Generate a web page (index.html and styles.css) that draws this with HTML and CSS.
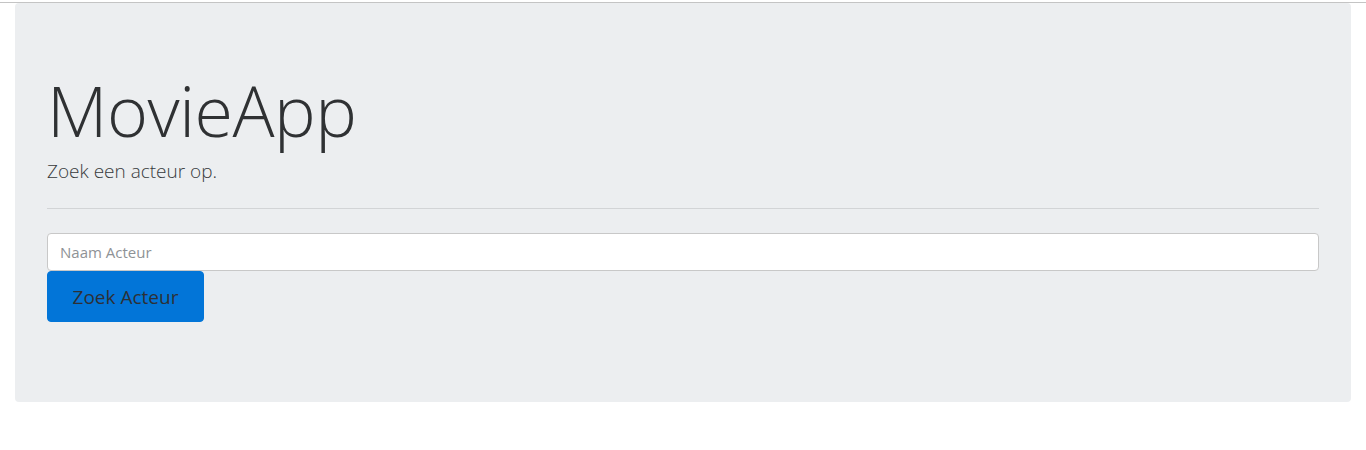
FILE: index.html
```html
<!DOCTYPE html>
<html lang="nl">
<head>
<meta charset="utf-8">
<title>MovieApp</title>
<link rel="stylesheet" href="styles.css">
</head>
<body>
<div class="topline"></div>
<div class="container">
  <div class="jumbotron">
    <h1 class="display">MovieApp</h1>
    <p class="lead">Zoek een acteur op.</p>
    <hr class="divider">
    <form class="search">
      <input class="input" type="text" placeholder="Naam Acteur">
      <button class="btn" type="button">Zoek Acteur</button>
    </form>
  </div>
</div>
</body>
</html>
```
FILE: styles.css
```css
* { box-sizing: border-box; }
html, body { margin: 0; padding: 0; background: #fff; }
body {
  font-family: "Open Sans", "Noto Sans", sans-serif;
  color: #373a3c;
}
.topline {
  height: 3px;
  border-bottom: 1px solid #c4c4c4;
  background: #fff;
}
.container {
  padding: 0 15px;
}
.jumbotron {
  background: #eceef0;
  border-radius: 4px;
  padding: 64px 32px 64px;
  height: 399px;
}
.display {
  margin: 0;
  font-family: "Open Sans", sans-serif;
  font-weight: 300;
  font-size: 70px;
  line-height: 86px;
  color: #2f3133;
  letter-spacing: -0.5px;
}
.lead {
  margin: 4px 0 0;
  font-family: "Open Sans", sans-serif;
  font-weight: 300;
  font-size: 19px;
  line-height: 28px;
  color: #373a3c;
}
.divider {
  margin: 23px 0 0;
  border: 0;
  border-top: 1px solid #d2d4d6;
  height: 0;
}
.search {
  margin-top: 24px;
  display: flex;
  flex-direction: column;
  align-items: flex-start;
}
.input {
  width: 100%;
  height: 38px;
  padding: 6px 12px;
  border: 1px solid #c8c8c8;
  border-radius: 4px;
  background: #fff;
  font-family: "Open Sans", sans-serif;
  font-size: 15px;
  color: #373a3c;
  outline: none;
}
.input::placeholder { color: #8e9296; }
.btn {
  height: 51px;
  width: 157px;
  padding: 0;
  border: 1px solid #0275d8;
  border-radius: 4px;
  background: #0275d8;
  font-family: "Open Sans", sans-serif;
  font-size: 19px;
  color: #2d3035;
  cursor: pointer;
}
```
